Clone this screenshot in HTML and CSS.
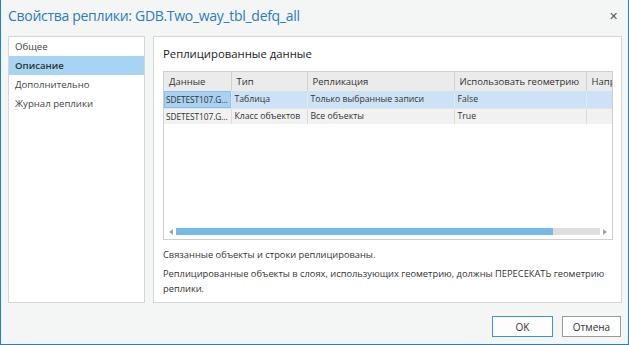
FILE: index.html
```
<!DOCTYPE html>
<html lang="ru">
<head>
    <meta charset="UTF-8">
    <title>Свойства реплики</title>
    <link rel="stylesheet" href="styles.css">
</head>
<body>
    <div class="window">
        <div class="titlebar">
            <span class="title">Свойства реплики: GDB.Two_way_tbl_defq_all</span>
            <span class="close">&#x2715;</span>
        </div>

        <div class="main">
            <ul class="nav">
                <li>Общее</li>
                <li class="active">Описание</li>
                <li>Дополнительно</li>
                <li>Журнал реплики</li>
            </ul>

            <div class="content">
                <h2>Реплицированные данные</h2>
                <div class="grid">
                    <div class="grid-body">
                        <table>
                            <colgroup>
                                <col class="c-data">
                                <col class="c-type">
                                <col class="c-repl">
                                <col class="c-geom">
                                <col class="c-dir">
                            </colgroup>
                            <tr class="head">
                                <th>Данные</th>
                                <th>Тип</th>
                                <th>Репликация</th>
                                <th>Использовать геометрию</th>
                                <th>Напр</th>
                            </tr>
                            <tr class="selected">
                                <td class="current name">SDETEST107.G...</td>
                                <td>Таблица</td>
                                <td>Только выбранные записи</td>
                                <td>False</td>
                                <td></td>
                            </tr>
                            <tr class="row">
                                <td class="name">SDETEST107.G...</td>
                                <td>Класс объектов</td>
                                <td>Все объекты</td>
                                <td>True</td>
                                <td></td>
                            </tr>
                        </table>
                    </div>
                    <div class="hscroll">
                        <span class="arrow left"></span>
                        <div class="track"><div class="thumb"></div></div>
                        <span class="arrow right"></span>
                    </div>
                </div>
                <p class="note">Связанные объекты и строки реплицированы.</p>
                <p class="note second">Реплицированные объекты в слоях, использующих геометрию, должны ПЕРЕСЕКАТЬ геометрию реплики.</p>
            </div>
        </div>

        <div class="footer">
            <button class="button primary">OK</button>
            <button class="button">Отмена</button>
        </div>
    </div>
</body>
</html>
```

FILE: styles.css
```
* {
    box-sizing: border-box;
}

body {
    margin: 0;
    font-family: "Open Sans", "Noto Sans", sans-serif;
    color: #333;
}

.window {
    width: 629px;
    height: 345px;
    border: 1px solid #1e7fcf;
    border-top: none;
    background-color: #f4f5f5;
    display: flex;
    flex-direction: column;
}

.titlebar {
    height: 36px;
    flex-shrink: 0;
    display: flex;
    align-items: center;
    justify-content: space-between;
    padding: 0 10px 5px 7px;
}

.title {
    font-size: 14px;
    color: #2b7bc0;
    letter-spacing: -0.3px;
}

.close {
    font-size: 11px;
    color: #555;
}

.main {
    display: flex;
    gap: 8px;
    height: 267px;
    flex-shrink: 0;
    padding: 0 6px 0 7px;
}

.nav {
    width: 137px;
    flex-shrink: 0;
    margin: 0;
    padding: 0;
    list-style: none;
    background-color: white;
    border: 1px solid #d6d6d6;
}

.nav li {
    height: 19px;
    line-height: 19px;
    padding-left: 6px;
    font-size: 9.6px;
    color: #444;
}

.nav li.active {
    background-color: #a7d4f2;
    font-weight: 600;
    color: #333;
}

.content {
    flex: 1;
    min-width: 0;
    background-color: white;
    border: 1px solid #d6d6d6;
    padding: 9px 8px 0 9px;
}

h2 {
    margin: 0 0 9px 0;
    height: 16px;
    line-height: 16px;
    font-size: 11.3px;
    font-weight: normal;
    color: #222;
}

.grid {
    height: 169px;
    border: 1px solid #cfcfcf;
    display: flex;
    flex-direction: column;
}

.grid-body {
    flex: 1;
    overflow: hidden;
}

table {
    border-collapse: collapse;
    table-layout: fixed;
    width: 449px;
    font-size: 8.7px;
}

.c-data { width: 67px; }
.c-type { width: 76px; }
.c-repl { width: 147px; }
.c-geom { width: 132px; }
.c-dir { width: 27px; }

th, td {
    height: 17px;
    padding: 0 3px;
    white-space: nowrap;
    overflow: hidden;
    text-align: left;
    border-right: 1px solid #dcdcdc;
}

th {
    height: 19px;
    padding-left: 5px;
    font-weight: normal;
    font-size: 9.5px;
    background-color: #ebebeb;
    border-right-color: #d2d2d2;
    color: #333;
}

th:last-child {
    padding-right: 0;
}

td.name {
    padding-left: 2px;
    padding-right: 0;
    font-size: 8.4px;
    letter-spacing: -0.1px;
}

.selected td {
    background-color: #cde3f5;
    border-right-color: #dfe9f2;
}

.selected td.current {
    background-color: #a9d1f1;
    outline: 1px solid #8cc0ea;
    outline-offset: -1px;
}

.row td {
    height: 16px;
    background-color: #f1f1f1;
    border-top: 1px solid #e4e4e4;
}

.hscroll {
    height: 12px;
    display: flex;
    align-items: center;
    padding: 0 3px 3px 3px;
}

.arrow {
    width: 8px;
    height: 8px;
    display: flex;
    align-items: center;
    justify-content: center;
}

.arrow::before {
    content: "";
    border-top: 3px solid transparent;
    border-bottom: 3px solid transparent;
}

.arrow.left::before {
    border-right: 4px solid #a6a6a6;
}

.arrow.right::before {
    border-left: 4px solid #a6a6a6;
}

.track {
    flex: 1;
    height: 7px;
    margin: 0 1px;
    background-color: #dedede;
}

.thumb {
    width: 89%;
    height: 100%;
    background-color: #76b9e8;
}

.note {
    margin: 7px 0 0 0;
    font-size: 9.3px;
    line-height: 15px;
    color: #333;
}

.note.second {
    margin-top: 4px;
}

.footer {
    flex: 1;
    display: flex;
    justify-content: flex-end;
    align-items: flex-start;
    gap: 9px;
    padding: 13px 7px 0 0;
}

.button {
    width: 59px;
    height: 21px;
    font-family: inherit;
    font-size: 10px;
    color: #333;
    background-color: #fdfdfd;
    border: 1px solid #9a9a9a;
}

.button.primary {
    width: 61px;
    border-color: #3c95dc;
}
```
